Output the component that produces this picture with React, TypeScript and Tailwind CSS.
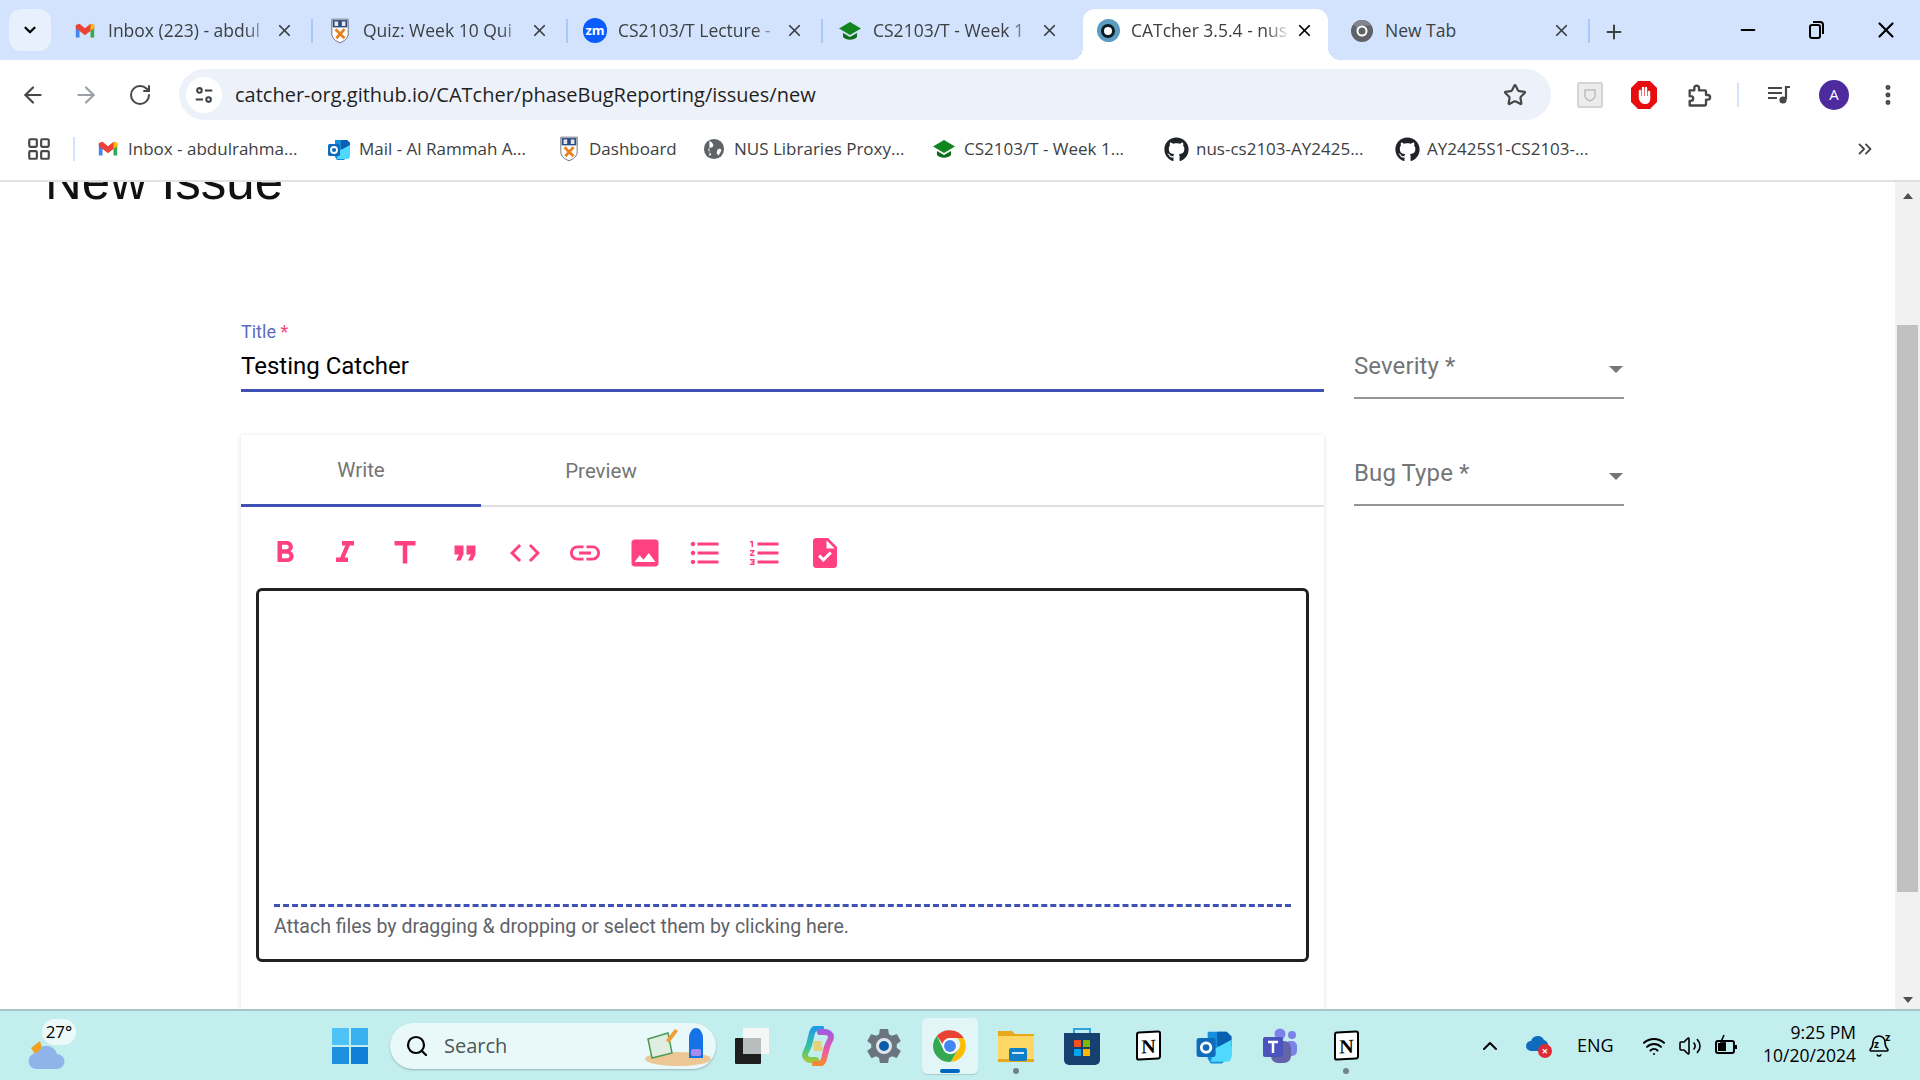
import { ChevronDown, ChevronsRight, ChevronUp, Search, Star, Plus, X, Minus, ArrowLeft, ArrowRight, RotateCw, LayoutGrid, EllipsisVertical, Volume2, Wifi, Bell } from "lucide-react";
import { FaGithub } from "react-icons/fa";
import { IoSettingsSharp } from "react-icons/io5";

const PINK_ICONS = [
  "M15.6 10.79c.97-.67 1.65-1.77 1.65-2.79 0-2.26-1.75-4-4-4H7v14h7.04c2.09 0 3.71-1.7 3.71-3.79 0-1.52-.86-2.82-2.15-3.42zM10 6.5h3c.83 0 1.5.67 1.5 1.5s-.67 1.5-1.5 1.5h-3v-3zm3.5 9H10v-3h3.5c.83 0 1.5.67 1.5 1.5s-.67 1.5-1.5 1.5z",
  "M10 4v3h2.21l-3.42 8H6v3h8v-3h-2.21l3.42-8H18V4z",
  "M5 4v3h5.5v12h3V7H19V4z",
  "M6 17h3l2-4V7H5v6h3zm8 0h3l2-4V7h-6v6h3z",
  "M9.4 16.6L4.8 12l4.6-4.6L8 6l-6 6 6 6 1.4-1.4zm5.2 0l4.6-4.6-4.6-4.6L16 6l6 6-6 6-1.4-1.4z",
  "M3.9 12c0-1.71 1.39-3.1 3.1-3.1h4V7H7c-2.76 0-5 2.24-5 5s2.24 5 5 5h4v-1.9H7c-1.71 0-3.1-1.39-3.1-3.1zM8 13h8v-2H8v2zm9-6h-4v1.9h4c1.71 0 3.1 1.39 3.1 3.1s-1.39 3.1-3.1 3.1h-4V17h4c2.76 0 5-2.24 5-5s-2.24-5-5-5z",
  "M21 19V5c0-1.1-.9-2-2-2H5c-1.1 0-2 .9-2 2v14c0 1.1.9 2 2 2h14c1.1 0 2-.9 2-2zM8.5 13.5l2.5 3.01L14.5 12l4.5 6H5l3.5-4.5z",
  "M4 10.5c-.83 0-1.5.67-1.5 1.5s.67 1.5 1.5 1.5 1.5-.67 1.5-1.5-.67-1.5-1.5-1.5zm0-6c-.83 0-1.5.67-1.5 1.5S3.17 7.5 4 7.5 5.5 6.83 5.5 6 4.83 4.5 4 4.5zm0 12c-.83 0-1.5.68-1.5 1.5s.68 1.5 1.5 1.5 1.5-.68 1.5-1.5-.67-1.5-1.5-1.5zM7 19h14v-2H7v2zm0-6h14v-2H7v2zm0-8v2h14V5H7z",
  "M2 17h2v.5H3v1h1v.5H2v1h3v-4H2v1zm1-9h1V4H2v1h1v3zm-1 3h1.8L2 13.1v.9h3v-1H3.2L5 10.9V10H2v1zm5-6v2h14V5H7zm0 14h14v-2H7v2zm0-6h14v-2H7v2z",
  "M14 2H6c-1.1 0-1.99.9-1.99 2L4 20c0 1.1.89 2 1.99 2H18c1.1 0 2-.9 2-2V8l-6-6zm-3.06 16L7.4 14.46l1.41-1.41 2.12 2.12 4.24-4.24 1.41 1.41L10.94 18zM13 9V3.5L18.5 9H13z",
];

function Gmail({ size = 22 }: { size?: number }) {
  return (
    <svg width={size} height={size} viewBox="0 0 24 24">
      <path d="M2 6v13h4V10z" fill="#4285f4" />
      <path d="M22 6v13h-4V10z" fill="#34a853" />
      <path d="M2 5.5 6 4l6 5 6-5 4 1.5V9l-4 3-6 4.5L6 12 2 9z" fill="#ea4335" />
      <path d="M18 4l4 1.5V9l-4 3z" fill="#fbbc04" />
    </svg>
  );
}

function Crest() {
  return (
    <svg width="20" height="28" viewBox="0 0 22 28">
      <path d="M2 1h18v16c0 5-4 8-9 10-5-2-9-5-9-10z" fill="#fff" stroke="#667" strokeWidth="1" />
      <rect x="3" y="2" width="16" height="8" fill="#2b4a80" />
      <rect x="5" y="3.500" width="4" height="5" fill="#e6e6e6" />
      <rect x="13" y="3.500" width="4" height="5" fill="#e6e6e6" />
      <path d="M6 12l10 10M16 12 7 22" stroke="#e8801c" strokeWidth="3" />
    </svg>
  );
}

function ZoomIcon() {
  return (
    <div className="size-[25px] rounded-full bg-[#0b5cff] flex items-center justify-center text-white text-[13px] leading-none font-bold">
      zm
    </div>
  );
}

function Cap({ size = 24 }: { size?: number }) {
  return (
    <svg width={size} height={size} viewBox="0 0 24 24">
      <path d="M12 3 1 9.500 12 16l11-6.500z" fill="#12851e" />
      <path d="M5 14v4c3 3.500 11 3.500 14 0v-4l-7 4z" fill="#0f6e18" />
    </svg>
  );
}

function Catcher() {
  return (
    <div className="size-[23px] rounded-full bg-[#5b9cc0] flex items-center justify-center">
      <div className="size-[14px] rounded-full border-[3px] border-[#0d1b24] bg-white" />
    </div>
  );
}

function ChromeGray({ size = 24 }: { size?: number }) {
  return (
    <svg width={size} height={size} viewBox="0 0 24 24">
      <circle cx="12" cy="12" r="11" fill="#5f6368" />
      <path d="M12 1a11 11 0 0 1 9.500 5.500H12a5.500 5.500 0 0 0-5 3L3.500 5A11 11 0 0 1 12 1z" fill="#80868b" />
      <circle cx="12" cy="12" r="5.500" fill="#fff" />
      <circle cx="12" cy="12" r="3.500" fill="#5f6368" />
    </svg>
  );
}

function Globe() {
  return (
    <svg width="22" height="22" viewBox="0 0 24 24">
      <circle cx="12" cy="12" r="11" fill="#5f6368" />
      <path d="M7 3c3 2 5 4 4 6s-4 1-5 3 2 4 3 6l-2 2M17 12c2-1 3 0 3 2l-3 5-2-2c0-2 0-4 2-5z" fill="#fff" />
    </svg>
  );
}

function Outlook({ size = 24 }: { size?: number }) {
  return (
    <svg width={size} height={size} viewBox="0 0 24 24">
      <path d="M8 3h12l3 3v12l-6 5H10l-2-3z" fill="#1490df" />
      <path d="M14 3h6l3 3v6h-9z" fill="#0a5fb0" />
      <path d="M12 14l11-6v11a3 3 0 0 1-3 3H10z" fill="#50d9ff" />
      <rect x="1" y="7" width="12" height="12" rx="1.500" fill="#0f6cbd" />
      <circle cx="7" cy="13" r="3" fill="none" stroke="#fff" strokeWidth="1.800" />
    </svg>
  );
}

function Notion() {
  return (
    <div className="w-[25px] h-[29px] rounded-[3px] border-[2px] border-black bg-white flex items-center justify-center text-black text-[20px] leading-none font-bold [font-family:'Liberation_Serif',serif] -skew-y-3">
      N
    </div>
  );
}

function Tab({ icon, title, active, wide }: { icon: React.ReactNode; title: string; active?: boolean; wide?: boolean }) {
  return (
    <div
      className={
        active
          ? "w-[245px] h-[51px] mx-[6px] z-10 bg-white rounded-t-[12px] flex items-center pl-[13px] pb-[8px] relative"
          : "w-[255px] h-[51px] flex items-center pl-[16px] pr-[18px] pb-[8px]"
      }
    >
      <div className="w-[24px] flex justify-center shrink-0">{icon}</div>
      <div
        className={
          wide
            ? "ml-[11px] flex-1 text-[17.500px] whitespace-nowrap overflow-hidden text-[#3c4043]"
            : "ml-[11px] flex-1 text-[17.500px] whitespace-nowrap overflow-hidden text-[#3c4043] [mask-image:linear-gradient(to_right,black_84%,transparent)]"
        }
      >
        {title}
      </div>
      <X className={active ? "size-[19px] text-black ml-[4px] mr-[14px] shrink-0" : "size-[19px] text-[#3c4043] ml-[4px] shrink-0"} strokeWidth={2.200} />
      {active && (
        <>
          <div className="absolute left-[-12px] bottom-0 size-[12px] bg-[radial-gradient(circle_at_0_0,transparent_12px,white_12px)]" />
          <div className="absolute right-[-12px] bottom-0 size-[12px] bg-[radial-gradient(circle_at_100%_0,transparent_12px,white_12px)]" />
        </>
      )}
    </div>
  );
}

function TabDivider() {
  return <div className="w-[2px] -mx-[1px] h-[24px] bg-[#a8c7fa] self-center mb-[7px]" />;
}

function Bookmark({ icon, label, width }: { icon: React.ReactNode; label: string; width: string }) {
  return (
    <div className={"flex items-center gap-[7px] " + width}>
      <div className="w-[26px] flex justify-center shrink-0">{icon}</div>
      <span className="text-[17px] text-[#3c4043] whitespace-nowrap">{label}</span>
    </div>
  );
}

function SelectField({ label }: { label: string }) {
  return (
    <div className="h-[53px] border-b-2 border-[#949494] flex items-start justify-between">
      <span className="text-[24px] leading-[40px] text-[#757575] tracking-[0.1px]">{label}</span>
      <div className="mt-[20px] mr-[1px] w-0 h-0 border-x-[7px] border-x-transparent border-t-[7px] border-t-[#757575]" />
    </div>
  );
}

function TaskIcon({ children, active, dot }: { children: React.ReactNode; active?: boolean; dot?: boolean }) {
  return (
    <div
      className={
        active
          ? "w-[56px] h-[56px] mx-[5px] rounded-[5px] bg-[#e3f6f7] shadow-[0_1px_1px_rgba(0,0,0,0.15)] flex items-center justify-center relative"
          : "w-[66px] h-[56px] flex items-center justify-center relative"
      }
    >
      {children}
      {active && <div className="absolute bottom-[1px] left-[18px] w-[20px] h-[4px] rounded-full bg-[#0067c0]" />}
      {dot && <div className="absolute bottom-[0px] left-[30px] size-[6px] rounded-full bg-[#6f8586]" />}
    </div>
  );
}

export default function App() {
  return (
    <div className="w-[1920px] h-[1080px] flex flex-col overflow-hidden bg-white [font-family:'Open_Sans','Noto_Sans',sans-serif]">
      {/* tab strip */}
      <div className="h-[60px] bg-[#d3e3fd] flex items-end shrink-0">
        <div className="ml-[9px] mb-[9px] w-[42px] h-[42px] rounded-[12px] bg-[#e8f0fe] flex items-center justify-center">
          <ChevronDown className="size-[18px] text-black" strokeWidth={3} />
        </div>
        <div className="ml-[6px] flex items-stretch">
          <Tab icon={<Gmail />} title="Inbox (223) - abdul" />
          <TabDivider />
          <Tab icon={<Crest />} title="Quiz: Week 10 Qui" />
          <TabDivider />
          <Tab icon={<ZoomIcon />} title="CS2103/T Lecture -" />
          <TabDivider />
          <Tab icon={<Cap />} title="CS2103/T - Week 1" />
          <Tab active icon={<Catcher />} title="CATcher 3.5.4 - nus" />
          <Tab wide icon={<ChromeGray />} title="New Tab" />
          <TabDivider />
        </div>
        <Plus className="ml-[14px] mb-[17px] size-[22px] text-[#3c4043]" strokeWidth={2.200} />
        <div className="ml-auto flex items-center mb-[17px] pr-[21px] gap-[46px]">
          <Minus className="size-[22px] text-black" strokeWidth={2} />
          <svg width="22" height="22" viewBox="0 0 22 22" fill="none" stroke="#000" strokeWidth="2">
            <rect x="5" y="6" width="10" height="13" rx="2" />
            <path d="M8 3h7a3 3 0 0 1 3 3v9" />
          </svg>
          <X className="size-[26px] text-black" strokeWidth={2} />
        </div>
      </div>

      {/* address bar row */}
      <div className="h-[66px] bg-white rounded-t-[10px] flex items-start shrink-0 relative">
        <div className="h-[51px] mt-[9px] flex items-center w-full">
          <ArrowLeft className="ml-[20px] size-[26px] text-[#474747]" strokeWidth={2} />
          <ArrowRight className="ml-[27px] size-[26px] text-[#9aa0a6]" strokeWidth={2} />
          <RotateCw className="ml-[29px] size-[24px] text-[#474747]" strokeWidth={2} />
          <div className="ml-[27px] w-[1372px] h-[51px] rounded-full bg-[#edf2fa] flex items-center">
            <div className="ml-[7px] size-[36px] rounded-full bg-white flex items-center justify-center">
              <svg width="22" height="22" viewBox="0 0 24 24" fill="none" stroke="#3c4043" strokeWidth="2.200">
                <circle cx="7" cy="7" r="2.500" />
                <path d="M13 7h8M3 17h8" />
                <circle cx="17" cy="17" r="2.500" />
              </svg>
            </div>
            <span className="ml-[13px] text-[20px] text-[#1f1f1f] whitespace-nowrap">catcher-org.github.io/CATcher/phaseBugReporting/issues/new</span>
            <Star className="ml-auto mr-[24px] size-[24px] text-[#474747]" strokeWidth={2.200} />
          </div>
          <div className="ml-[26px] size-[26px] rounded-[3px] border-2 border-[#d4d4d4] bg-[#ececec] flex items-center justify-center">
            <svg width="14" height="14" viewBox="0 0 14 14" fill="none" stroke="#bdbdbd" strokeWidth="1.500">
              <path d="M2 2h10v6c0 2-3 4-5 5-2-1-5-3-5-5z" />
            </svg>
          </div>
          <svg className="ml-[27px]" width="28" height="30" viewBox="0 0 28 30">
            <path d="M8 1h12l7 7v14l-7 7H8l-7-7V8z" fill="#e60e0e" />
            <path d="M10 18V11M13 18V8M16 18V8M19 18v-6" stroke="#fff" strokeWidth="2.400" strokeLinecap="round" />
            <path d="M9 16h11.200v3c0 3-2 5-5 5-3 0-4-1-6-4z" fill="#fff" />
          </svg>
          <svg className="ml-[27px]" width="28" height="28" viewBox="0 0 24 24" fill="none" stroke="#474747" strokeWidth="2" strokeLinejoin="round">
            <path d="M4 8h4V6a2 2 0 0 1 4 0v2h5a1 1 0 0 1 1 1v3h1.500a2 2 0 0 1 0 4H18v4a1 1 0 0 1-1 1H4v-4h1a2 2 0 0 0 0-4H4z" />
          </svg>
          <div className="ml-[24px] w-[2px] h-[24px] bg-[#d3e3fd]" />
          <svg className="ml-[27px]" width="26" height="24" viewBox="0 0 26 24" fill="none" stroke="#474747" strokeWidth="2.200">
            <path d="M2 5h14M2 10h14M2 15h9" />
            <path d="M20 16V4h4" />
            <circle cx="17" cy="17" r="2.500" fill="#474747" />
          </svg>
          <div className="ml-[27px] size-[30px] rounded-full bg-[#4e2a9f] flex items-center justify-center text-white text-[15px]">A</div>
          <EllipsisVertical className="ml-[26px] size-[26px] text-[#474747]" strokeWidth={2.600} />
        </div>
      </div>

      {/* bookmarks bar */}
      <div className="h-[56px] bg-white border-b-2 border-[#e2e2e2] pb-[8px] flex items-center shrink-0">
        <LayoutGrid className="ml-[26px] size-[26px] text-[#474747]" strokeWidth={2} />
        <div className="ml-[21px] w-[2px] h-[24px] bg-[#d3e3fd]" />
        <div className="ml-[20px] flex items-center">
          <Bookmark icon={<Gmail />} label="Inbox - abdulrahma..." width="w-[231px]" />
          <Bookmark icon={<Outlook />} label="Mail - Al Rammah A..." width="w-[230px]" />
          <Bookmark icon={<Crest />} label="Dashboard" width="w-[145px]" />
          <Bookmark icon={<Globe />} label="NUS Libraries Proxy..." width="w-[230px]" />
          <Bookmark icon={<Cap />} label="CS2103/T - Week 1..." width="w-[232px]" />
          <Bookmark icon={<FaGithub className="size-[25px] text-[#1f2328]" />} label="nus-cs2103-AY2425..." width="w-[231px]" />
          <Bookmark icon={<FaGithub className="size-[25px] text-[#1f2328]" />} label="AY2425S1-CS2103-..." width="w-[200px]" />
        </div>
        <ChevronsRight className="ml-auto mr-[44px] size-[22px] text-[#474747]" strokeWidth={2} />
      </div>

      {/* page */}
      <div className="flex-1 flex min-h-0 [font-family:Roboto,sans-serif]">
        <div className="flex-1 min-w-0 overflow-hidden">
          <h1 className="ml-[45px] mt-[-29px] h-[57px] text-[51px] leading-[57px] text-[#111] [font-family:'Liberation_Sans',sans-serif]">New Issue</h1>

          <div className="ml-[241px] mt-[110px] w-[1383px] flex gap-[30px]">
            {/* left column */}
            <div className="w-[1083px] shrink-0">
              <div className="h-[72px] border-b-[3px] border-[#3f51b5]">
                <div className="text-[18px] leading-[24px] text-[#5c6bc0]">
                  Title <span className="text-[#ff4081]">*</span>
                </div>
                <div className="mt-[4px] text-[24px] leading-[36px] text-black">Testing Catcher</div>
              </div>

              <div className="mt-[43px] shadow-[0_1px_5px_rgba(0,0,0,0.13)] bg-white h-[600px]">
                <div className="h-[72px] border-b-2 border-[#e0e0e0] flex">
                  <div className="w-[240px] h-[72px] pt-[2px] border-b-[3px] border-[#3f51b5] flex items-center justify-center text-[20.500px] text-[#757575]">
                    Write
                  </div>
                  <div className="w-[240px] pt-[2px] flex items-center justify-center text-[20.500px] text-[#757575]">
                    Preview
                  </div>
                </div>
                <div className="pl-[26px] pt-[28px] flex gap-[24px]">
                  {PINK_ICONS.map((d, index) => (
                    <svg key={index} className="size-[36px] text-[#ff4081]" viewBox="0 0 24 24" fill="currentColor">
                      <path d={d} />
                    </svg>
                  ))}
                </div>
                <div className="mx-[15px] mt-[17px] h-[374px] rounded-[6px] border-[3px] border-[#212121] px-[15px] flex flex-col justify-end">
                  <div className="border-t-[3px] border-dashed border-[#3f51b5] h-[55px] flex items-start">
                    <span className="mt-[7px] text-[19.500px] leading-[26px] text-[#5f6368]">Attach files by dragging &amp; dropping or select them by clicking here.</span>
                  </div>
                </div>
              </div>
            </div>

            {/* right column */}
            <div className="w-[270px] shrink-0 flex flex-col gap-[54px] mt-[26px]">
              <SelectField label="Severity *" />
              <SelectField label="Bug Type *" />
            </div>
          </div>
        </div>

        {/* scrollbar */}
        <div className="w-[25px] bg-[#f1f1f1] flex flex-col items-center shrink-0">
          <div className="h-[19px] mt-[4px] flex items-center justify-center">
            <div className="w-0 h-0 border-x-[5px] border-x-transparent border-b-[6px] border-b-[#505050]" />
          </div>
          <div className="mt-[120px] w-[21px] h-[567px] bg-[#c1c1c1]" />
          <div className="mt-auto h-[19px] flex items-center justify-center">
            <div className="w-0 h-0 border-x-[5px] border-x-transparent border-t-[6px] border-t-[#505050]" />
          </div>
        </div>
      </div>

      {/* taskbar */}
      <div className="h-[71px] bg-[#c3eeee] border-t-[2px] border-[#a4c6c6] flex items-center shrink-0 relative [font-family:'Open_Sans',sans-serif]">
        <div className="ml-[28px] w-[44px] h-[50px] relative">
          <svg width="38" height="32" viewBox="0 0 38 32" className="absolute left-0 bottom-0">
            <path d="M9 30a8 8 0 0 1-1-16 11 11 0 0 1 21 1 7.500 7.500 0 0 1 0 15z" fill="#8fb4ea" />
            <path d="M3 9l9-7 2 7-7 6z" fill="#f0a020" />
          </svg>
          <div className="absolute left-[14px] top-[-2px] w-[34px] h-[26px] rounded-full bg-[#ecf9f9] text-[17px] leading-[26px] text-center text-black">27°</div>
        </div>

        <div className="ml-[260px] grid grid-cols-2 gap-[2px] w-[36px] h-[36px]">
          <div className="bg-[#4fc3f7]" />
          <div className="bg-[#38b0f0]" />
          <div className="bg-[#1e90e0]" />
          <div className="bg-[#0f7fd8]" />
        </div>

        <div className="ml-[22px] w-[326px] h-[46px] rounded-full bg-[#e9f9f9] shadow-[0_1px_2px_rgba(0,0,0,0.25)] flex items-center relative">
          <Search className="ml-[15px] size-[24px] text-black" strokeWidth={2.200} />
          <span className="ml-[15px] text-[20px] text-[#4d5656]">Search</span>
          <svg className="absolute right-[4px] top-[3px]" width="72" height="40" viewBox="0 0 72 40">
            <ellipse cx="38" cy="33" rx="33" ry="7" fill="#ecc795" />
            <path d="M8 13l20-6 4 20-20 5z" fill="#dfeee0" stroke="#4d9b58" strokeWidth="1.500" />
            <path d="M26 14l9-11 3 2-9 12z" fill="#f39c34" />
            <path d="M49 32V12c0-5 3-10 7-10s7 5 7 10v20z" fill="#1673e6" />
            <rect x="51" y="23" width="10" height="7" rx="2" fill="#a98cf0" />
          </svg>
        </div>

        <div className="ml-[3px] flex items-center">
          <TaskIcon>
            <div className="relative w-[34px] h-[36px]">
              <div className="absolute right-0 top-0 w-[26px] h-[26px] bg-[#f5f7f7]" />
              <div className="absolute left-0 bottom-0 w-[26px] h-[26px] bg-[#1e1e1e] rounded-[1px]" />
              <div className="absolute left-[8px] top-[10px] w-[18px] h-[16px] bg-[#b8bdbd]" />
            </div>
          </TaskIcon>
          <TaskIcon>
            <svg width="36" height="40" viewBox="0 0 36 40" fill="none">
              <defs>
                <linearGradient id="copL" x1="0" y1="0" x2="0" y2="1">
                  <stop offset="0" stopColor="#1e9be8" />
                  <stop offset="0.600" stopColor="#36c2a0" />
                  <stop offset="1" stopColor="#9ac93c" />
                </linearGradient>
                <linearGradient id="copR" x1="0" y1="0" x2="0" y2="1">
                  <stop offset="0" stopColor="#a35be0" />
                  <stop offset="0.600" stopColor="#ee5aa0" />
                  <stop offset="1" stopColor="#f58a32" />
                </linearGradient>
              </defs>
              <path d="M21 2h-3c-5 0-6 4-7 9l-2 8c-2 6-4 7-4 10 0 3 3 5 6 5h5" stroke="url(#copL)" strokeWidth="6" strokeLinecap="round" />
              <path d="M15 38h3c5 0 6-4 7-9l2-8c2-6 4-7 4-10 0-3-3-5-6-5h-5" stroke="url(#copR)" strokeWidth="6" strokeLinecap="round" />
              <path d="M13 15h8l2 10h-9z" fill="#f9c02f" opacity="0.600" />
            </svg>
          </TaskIcon>
          <TaskIcon>
            <div className="relative">
              <IoSettingsSharp className="size-[38px] text-[#6b7580]" />
              <div className="absolute left-[11px] top-[11px] size-[16px] rounded-full border-[3px] border-[#dfe6ea] bg-[#0a5ea8]" />
            </div>
          </TaskIcon>
          <TaskIcon active>
            <svg width="38" height="38" viewBox="0 0 48 48">
              <path d="M24 4a20 20 0 0 1 17.300 10H24a10 10 0 0 0-9.500 7L7.500 11A20 20 0 0 1 24 4z" fill="#ea4335" />
              <path d="M41.300 14A20 20 0 0 1 25 44l8-14a10 10 0 0 0 0-16z" fill="#fbbc04" />
              <path d="M7.500 11 16 29a10 10 0 0 0 17 1l-8 14A20 20 0 0 1 7.500 11z" fill="#34a853" />
              <circle cx="24" cy="24" r="9.500" fill="#fff" />
              <circle cx="24" cy="24" r="7.500" fill="#4285f4" />
            </svg>
          </TaskIcon>
          <TaskIcon dot>
            <svg width="38" height="36" viewBox="0 0 38 36">
              <path d="M1 3h14l3 3h19v28H1z" fill="#e8a81c" />
              <rect x="1" y="8" width="36" height="26" fill="#fdd867" />
              <rect x="1" y="31" width="36" height="3" fill="#e8a81c" />
              <rect x="12" y="20" width="18" height="13" rx="2" fill="#0f7fc9" />
              <rect x="15" y="24" width="12" height="2" fill="#cde8f8" />
            </svg>
          </TaskIcon>
          <TaskIcon>
            <svg width="36" height="40" viewBox="0 0 36 40">
              <path d="M10 8V3h16v5" fill="none" stroke="#2aa6de" strokeWidth="2" />
              <path d="M0 7h36v27a5 5 0 0 1-5 5H5a5 5 0 0 1-5-5z" fill="#16406f" />
              <rect x="10" y="14" width="7" height="7" fill="#f25022" />
              <rect x="19" y="14" width="7" height="7" fill="#7fba00" />
              <rect x="10" y="23" width="7" height="7" fill="#00a4ef" />
              <rect x="19" y="23" width="7" height="7" fill="#ffb900" />
            </svg>
          </TaskIcon>
          <TaskIcon><Notion /></TaskIcon>
          <TaskIcon><Outlook size={38} /></TaskIcon>
          <TaskIcon>
            <svg width="38" height="36" viewBox="0 0 38 36">
              <circle cx="31" cy="7" r="4" fill="#7b83eb" />
              <circle cx="19" cy="6" r="5.500" fill="#7b83eb" />
              <rect x="24" y="13" width="12" height="15" rx="5" fill="#7b83eb" />
              <rect x="10" y="13" width="20" height="22" rx="7" fill="#6264a7" />
              <rect x="2" y="9" width="20" height="20" rx="2" fill="#4b53bc" />
              <path d="M7 14h10M12 14v11" stroke="#fff" strokeWidth="2.500" />
            </svg>
          </TaskIcon>
          <TaskIcon dot><Notion /></TaskIcon>
        </div>

        <ChevronUp className="ml-[99px] size-[24px] text-black" strokeWidth={2} />
        <div className="ml-[24px] relative w-[26px] h-[24px]">
          <svg width="24" height="18" viewBox="0 0 24 18" className="absolute left-0 top-0">
            <path d="M5 17a5 5 0 0 1 0-10 7 7 0 0 1 13-1 6 6 0 0 1 1 11z" fill="#0f6cbd" />
          </svg>
          <div className="absolute right-0 bottom-0 size-[14px] rounded-full bg-[#e02b36] text-white text-[11px] leading-[14px] text-center font-bold">×</div>
        </div>
        <span className="ml-[25px] text-[18px] text-black w-[44px]">ENG</span>
        <Wifi className="ml-[21px] size-[24px] text-black" strokeWidth={2} />
        <Volume2 className="ml-[12px] size-[24px] text-black" strokeWidth={1.600} />
        <svg className="ml-[12px]" width="26" height="26" viewBox="0 0 26 26" fill="none" stroke="#000" strokeWidth="2">
          <rect x="2" y="8" width="18" height="12" rx="2" />
          <rect x="4" y="10" width="8" height="8" fill="#000" stroke="none" />
          <path d="M22 12v4" />
          <path d="M10 2 7 9h4l-2 6" strokeWidth="1.600" />
        </svg>
        <div className="ml-[12px] w-[104px] -mt-[4px] text-right text-[17.500px] leading-[23px] text-black">
          <div>9:25 PM</div>
          <div>10/20/2024</div>
        </div>
        <div className="ml-[11px] relative">
          <Bell className="size-[24px] text-black" strokeWidth={1.600} />
          <span className="absolute left-[7px] top-[5px] text-[10px] leading-none font-bold text-black">z</span>
          <span className="absolute left-[18px] top-[-3px] text-[11px] leading-none font-bold text-black">z</span>
        </div>
      </div>
    </div>
  );
}
